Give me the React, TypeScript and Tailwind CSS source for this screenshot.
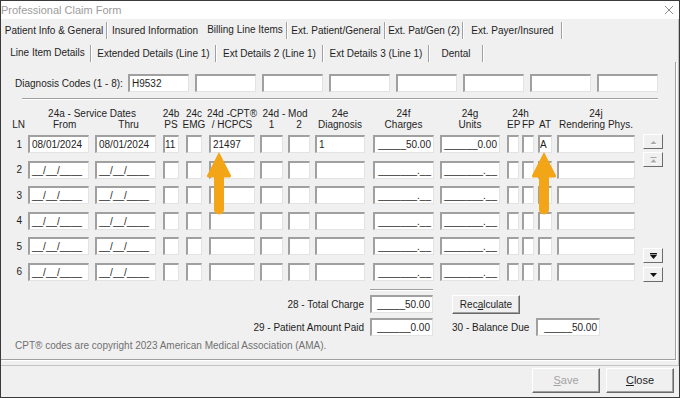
import React from "react";

type Tab = { label: string; w: string; active?: boolean; hideSep?: boolean };

const outerTabs: Tab[] = [
  { label: "Patient Info & General", w: "w-[104px]" },
  { label: "Insured Information", w: "w-[94px]", hideSep: true },
  { label: "Billing Line Items", w: "w-[82px]", active: true },
  { label: "Ext. Patient/General", w: "w-[96px]" },
  { label: "Ext. Pat/Gen (2)", w: "w-[76px]" },
  { label: "Ext. Payer/Insured", w: "w-[97px]" },
];

const innerTabs: Tab[] = [
  { label: "Line Item Details", w: "w-[85px]", active: true },
  { label: "Extended Details (Line 1)", w: "w-[123px]" },
  { label: "Ext Details 2 (Line 1)", w: "w-[105px]" },
  { label: "Ext Details 3 (Line 1)", w: "w-[104px]" },
  { label: "Dental", w: "w-[52px]" },
];

const rows = [
  { ln: "1", from: "08/01/2024", thru: "08/01/2024", ps: "11", cpt: "21497", diag: "1", charge: "_____50.00", units: "______0.00", at: "A" },
  { ln: "2" },
  { ln: "3" },
  { ln: "4" },
  { ln: "5" },
  { ln: "6" },
] as {
  ln: string;
  from?: string;
  thru?: string;
  ps?: string;
  cpt?: string;
  diag?: string;
  charge?: string;
  units?: string;
  at?: string;
}[];

const gridCols =
  "grid grid-cols-[27px_67px_68px_23px_23px_51px_28px_27px_58px_67px_67px_15px_16px_19px_78px]";

function Sep({ hidden }: { hidden?: boolean }) {
  return (
    <div
      className={
        hidden
          ? "w-[2px] self-stretch"
          : "w-[2px] self-stretch border-l border-r border-l-[#a0a0a0] border-r-white"
      }
    />
  );
}

function Box({
  w,
  right,
  tight,
  children,
}: {
  w: string;
  right?: boolean;
  tight?: boolean;
  children?: React.ReactNode;
}) {
  return (
    <div
      className={`${w} h-[18px] shrink-0 bg-white border-t-2 border-l-2 border-r border-b border-t-[#a0a0a0] border-l-[#a0a0a0] border-r-[#e3e3e3] border-b-[#e3e3e3] flex items-center whitespace-nowrap overflow-hidden ${
        right ? "justify-end pr-[2px]" : tight ? "pl-0" : "pl-[2px]"
      }`}
    >
      {children}
    </div>
  );
}

function Btn({
  className,
  children,
}: {
  className: string;
  children: React.ReactNode;
}) {
  return (
    <div
      className={`${className} shrink-0 flex items-center justify-center bg-[#f0f0f0] border border-t-white border-l-white border-r-[#696969] border-b-[#696969] shadow-[inset_-1px_-1px_0_#a0a0a0]`}
    >
      <span>{children}</span>
    </div>
  );
}

function ScrollBtn({ kind }: { kind: "top" | "up" | "next" | "last" }) {
  const off = kind === "top" || kind === "up";
  const c = off ? "#a8a8a8" : "#111111";
  return (
    <div className="w-[20px] h-[15px] bg-[#f0f0f0] border border-t-white border-l-white border-r-[#6b6b6b] border-b-[#6b6b6b] flex items-center justify-center">
      <svg width="9" height="8" viewBox="0 0 9 8">
        {kind === "top" && (
          <>
            <path d="M1.5 6 L4.5 3 L7.5 6 Z" fill="white" transform="translate(0.5 0.8)" />
            <path d="M1.5 6 L4.5 3 L7.5 6 Z" fill={c} />
          </>
        )}
        {kind === "up" && (
          <>
            <rect x="1.5" y="1" width="6" height="1" fill={c} />
            <path d="M1.5 6.5 L4.5 3.2 L7.5 6.5 Z" fill={c} />
            <rect x="2" y="7" width="6.5" height="1" fill="white" />
          </>
        )}
        {kind === "next" && (
          <>
            <rect x="1" y="1" width="7" height="1.4" fill={c} />
            <path d="M1 3 L8 3 L4.5 7 Z" fill={c} />
          </>
        )}
        {kind === "last" && <path d="M1 2 L8 2 L4.5 6 Z" fill={c} />}
      </svg>
    </div>
  );
}

function Arrow() {
  return (
    <svg width="26" height="64" viewBox="0 0 26 64">
      <path
        d="M13 1 L25 24.5 Q25.6 26.5 23.5 26.5 L18 26.5 L18 58.5 A5 5 0 0 1 8 58.5 L8 26.5 L2.5 26.5 Q0.4 26.5 1 24.5 Z"
        fill="#f2a516"
      />
    </svg>
  );
}

export default function App() {
  return (
    <div className="relative w-[680px] h-[398px] overflow-hidden bg-[#f0f0f0] border border-[#3a3a3a] flex flex-col font-['Liberation_Sans',Arial,sans-serif] text-[10px] leading-[11px] text-[#1e1e1e]">
      {/* title bar */}
      <div className="h-[18px] shrink-0 bg-white flex items-center justify-between pr-[5px]">
        <span className="text-[11px] text-[#9c9c9c]">Professional Claim Form</span>
        <svg width="10" height="10" viewBox="0 0 10 10">
          <path d="M1 1 L9 9 M9 1 L1 9" stroke="#8c8c8c" strokeWidth="1" />
        </svg>
      </div>

      {/* outer frame */}
      <div className="flex-1 min-h-0 flex flex-col border-r border-b border-r-[#c4c4c4] border-b-[#c4c4c4] pr-[2px] pb-[5px]">
        {/* outer tabs */}
        <div className="flex h-[17px] mt-[3px] pl-[1px] shrink-0">
          {outerTabs.map((t) => (
            <React.Fragment key={t.label}>
              <div
                className={`${t.w} flex justify-center whitespace-nowrap ${
                  t.active ? "items-start pt-[1.5px]" : "items-center"
                }`}
              >
                {t.label}
              </div>
              <Sep hidden={t.hideSep} />
            </React.Fragment>
          ))}
        </div>

        {/* inner tabs */}
        <div className="flex h-[17px] mt-[6px] pl-[4px] shrink-0">
          {innerTabs.map((t) => (
            <React.Fragment key={t.label}>
              <div
                className={`${t.w} flex justify-center whitespace-nowrap ${
                  t.active ? "items-start pt-[2px]" : "items-center"
                }`}
              >
                {t.label}
              </div>
              <Sep />
            </React.Fragment>
          ))}
        </div>

        {/* line items panel */}
        <div className="flex-1 min-h-0 flex flex-col border-r border-b border-r-[#a0a0a0] border-b-[#a0a0a0] shadow-[1px_1px_0_#ffffff]">
          {/* diagnosis codes */}
          <div className="flex items-center mt-[12px] pl-[14px]">
            <span className="w-[113px] whitespace-nowrap">Diagnosis Codes (1 - 8):</span>
            <div className="flex gap-[6px]">
              <Box w="w-[61px]">H9532</Box>
              <Box w="w-[61px]" />
              <Box w="w-[61px]" />
              <Box w="w-[61px]" />
              <Box w="w-[61px]" />
              <Box w="w-[61px]" />
              <Box w="w-[61px]" />
              <Box w="w-[61px]" />
            </div>
          </div>

          <div className="ml-[21px] w-[636px] h-[2px] mt-[6px] border-t border-b border-t-[#a0a0a0] border-b-white" />

          {/* column headers */}
          <div className={`${gridCols} mt-[8px] h-[22px] whitespace-nowrap`}>
            <div className="flex items-end justify-end pr-[3px]">LN</div>
            <div className="col-span-2 w-[128px] flex flex-col">
              <div className="text-center">24a - Service Dates</div>
              <div className="flex">
                <span className="pl-[25px]">From</span>
                <span className="pl-[42px]">Thru</span>
              </div>
            </div>
            <div className="w-[16px] flex flex-col items-center">
              <span>24b</span>
              <span>PS</span>
            </div>
            <div className="w-[16px] flex flex-col items-center">
              <span>24c</span>
              <span>EMG</span>
            </div>
            <div className="w-[46px] flex flex-col items-center">
              <span>24d -CPT®</span>
              <span>/ HCPCS</span>
            </div>
            <div className="col-span-2 w-[50px] flex flex-col">
              <div className="text-center">24d - Mod</div>
              <div className="flex">
                <span className="w-[23px] text-center">1</span>
                <span className="ml-[5px] w-[22px] text-center">2</span>
              </div>
            </div>
            <div className="w-[50px] flex flex-col items-center">
              <span>24e</span>
              <span>Diagnosis</span>
            </div>
            <div className="w-[61px] flex flex-col items-center">
              <span>24f</span>
              <span>Charges</span>
            </div>
            <div className="w-[60px] flex flex-col items-center">
              <span>24g</span>
              <span>Units</span>
            </div>
            <div className="col-span-2 w-[27px] flex flex-col">
              <div className="text-center">24h</div>
              <div className="flex">
                <span className="w-[12px] text-center">EP</span>
                <span className="ml-[3px] w-[12px] text-center">FP</span>
              </div>
            </div>
            <div className="w-[14px] flex flex-col items-center justify-end">
              <span>AT</span>
            </div>
            <div className="w-[78px] flex flex-col items-center">
              <span>24j</span>
              <span>Rendering Phys.</span>
            </div>
          </div>

          {/* rows + scroll buttons */}
          <div className="flex items-start mt-[5px]">
            <div className={`${gridCols} gap-y-[7.5px]`}>
              {rows.map((r) => (
                <React.Fragment key={r.ln}>
                  <div className="flex items-center justify-end pr-[6px]">{r.ln}</div>
                  <div>
                    <Box w="w-[61px]">{r.from ?? "__/__/____"}</Box>
                  </div>
                  <div>
                    <Box w="w-[61px]">{r.thru ?? "__/__/____"}</Box>
                  </div>
                  <div>
                    <Box w="w-[16px]" tight>
                      {r.ps}
                    </Box>
                  </div>
                  <div>
                    <Box w="w-[16px]" />
                  </div>
                  <div>
                    <Box w="w-[46px]">{r.cpt}</Box>
                  </div>
                  <div>
                    <Box w="w-[23px]" />
                  </div>
                  <div>
                    <Box w="w-[22px]" />
                  </div>
                  <div>
                    <Box w="w-[50px]">{r.diag}</Box>
                  </div>
                  <div>
                    <Box w="w-[61px]" right>
                      {r.charge ?? "_______.__"}
                    </Box>
                  </div>
                  <div>
                    <Box w="w-[60px]" right>
                      {r.units ?? "_______.__"}
                    </Box>
                  </div>
                  <div>
                    <Box w="w-[12px]" />
                  </div>
                  <div>
                    <Box w="w-[12px]" />
                  </div>
                  <div>
                    <Box w="w-[14px]" tight>
                      {r.at}
                    </Box>
                  </div>
                  <div>
                    <Box w="w-[78px]" />
                  </div>
                </React.Fragment>
              ))}
            </div>
            <div className="ml-[8px] -mt-[1px] h-[148px] flex flex-col justify-between">
              <div className="flex flex-col gap-[3px]">
                <ScrollBtn kind="top" />
                <ScrollBtn kind="up" />
              </div>
              <div className="flex flex-col gap-[4px]">
                <ScrollBtn kind="next" />
                <ScrollBtn kind="last" />
              </div>
            </div>
          </div>

          {/* totals */}
          <div className="ml-[369px] w-[63px] h-[2px] mt-[7px] border-t border-b border-t-[#a0a0a0] border-b-white" />

          <div className="flex items-start mt-[4px]">
            <span className="w-[363px] h-[18px] flex items-center justify-end whitespace-nowrap">
              28 - Total Charge
            </span>
            <div className="ml-[6px]">
              <Box w="w-[63px]" right>
                _____50.00
              </Box>
            </div>
            <Btn className="ml-[19px] w-[68px] h-[19px]">
              Rec<u>a</u>lculate
            </Btn>
          </div>

          <div className="flex items-center mt-[4px]">
            <span className="w-[363px] text-right whitespace-nowrap">29 - Patient Amount Paid</span>
            <div className="ml-[6px]">
              <Box w="w-[63px]" right>
                ______0.00
              </Box>
            </div>
            <span className="ml-[19px] w-[78px] whitespace-nowrap">30 - Balance Due</span>
            <div className="ml-[6px]">
              <Box w="w-[64px]" right>
                _____50.00
              </Box>
            </div>
          </div>

          <div className="mt-[4px] pl-[14px] text-[#707070] whitespace-nowrap">
            CPT® codes are copyright 2023 American Medical Association (AMA).
          </div>
        </div>
      </div>

      {/* dialog buttons */}
      <div className="h-[31px] shrink-0 flex justify-end items-start pt-[2px] pr-[5px] gap-[6px] text-[11px]">
        <Btn className="w-[68px] h-[25px] text-[#a3a3a3]">
          <u>S</u>ave
        </Btn>
        <Btn className="w-[68px] h-[25px]">
          <u>C</u>lose
        </Btn>
      </div>

      {/* highlight arrows */}
      <div className="absolute left-[205px] top-[150px]">
        <Arrow />
      </div>
      <div className="absolute left-[530px] top-[150px]">
        <Arrow />
      </div>
    </div>
  );
}
